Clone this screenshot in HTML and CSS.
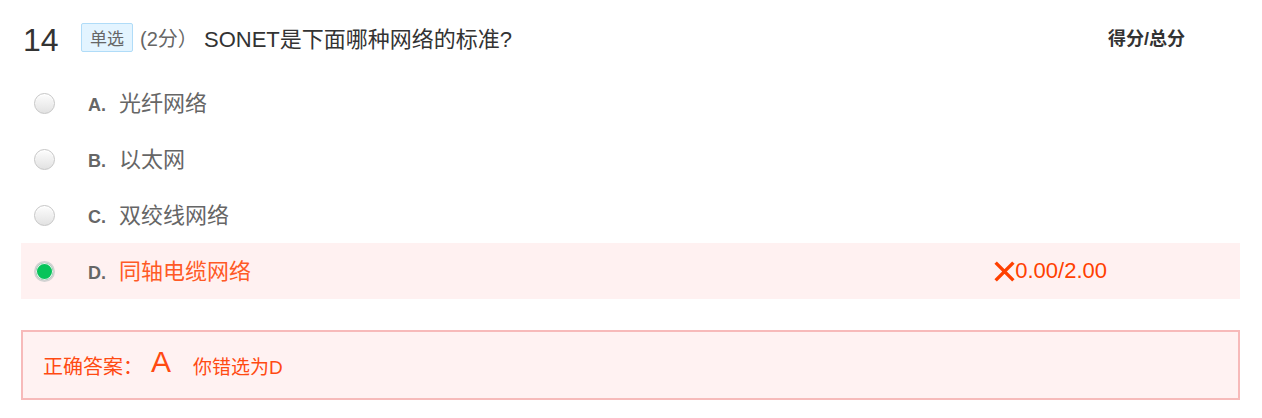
FILE: index.html
```html
<!DOCTYPE html>
<html lang="zh-CN">
<head>
<meta charset="utf-8">
<title>Question 14</title>
<link rel="stylesheet" href="styles.css">
</head>
<body>
<div class="quiz">
  <div class="q-head">
    <span class="q-num">14</span>
    <span class="q-tag">单选</span>
    <span class="q-score">(2分）</span>
    <span class="q-title">SONET是下面哪种网络的标准?</span>
    <span class="q-total">得分/总分</span>
  </div>
  <ul class="options">
    <li class="opt">
      <span class="radio"></span>
      <span class="opt-label"><span class="opt-letter">A.</span><span class="opt-text">光纤网络</span></span>
    </li>
    <li class="opt">
      <span class="radio"></span>
      <span class="opt-label"><span class="opt-letter">B.</span><span class="opt-text">以太网</span></span>
    </li>
    <li class="opt">
      <span class="radio"></span>
      <span class="opt-label"><span class="opt-letter">C.</span><span class="opt-text">双绞线网络</span></span>
    </li>
    <li class="opt opt-wrong">
      <span class="radio radio-on"></span>
      <span class="opt-label"><span class="opt-letter">D.</span><span class="opt-text">同轴电缆网络</span></span>
      <span class="result">
        <svg class="x-icon" viewBox="0 0 22 22" width="21" height="21" aria-hidden="true">
          <path d="M3 3 L19 19 M19 3 L3 19" stroke="#ff4000" stroke-width="3.6" stroke-linecap="square" fill="none"/>
        </svg><span class="result-num">0.00/2.00</span>
      </span>
    </li>
  </ul>
  <div class="answer">
    <span class="ans-label">正确答案：</span>
    <span class="ans-key">A</span>
    <span class="ans-yours">你错选为D</span>
  </div>
</div>
</body>
</html>
```

FILE: styles.css
```css
* { box-sizing: border-box; }

body {
  margin: 0;
  background: #ffffff;
  font-family: "Liberation Sans", "Noto Sans CJK SC", sans-serif;
  color: #333333;
}

.quiz {
  width: 1219px;
  margin-left: 21px;
  padding-top: 9px;
}

.q-head {
  display: flex;
  align-items: center;
  height: 56px;
}

.q-num {
  font-size: 32px;
  color: #333333;
  margin-left: 2px;
  margin-top: 6px;
  width: 58px;
}

.q-tag {
  display: inline-flex;
  align-items: center;
  height: 29px;
  padding: 0 8px;
  font-size: 17px;
  color: #666666;
  background: #e3f4ff;
  border: 1px solid #b0dcf8;
  border-radius: 2px;
}

.q-score {
  font-size: 20px;
  color: #666666;
  margin-left: 7px;
  width: 64px;
}

.q-title {
  font-size: 22px;
  color: #333333;
}

.q-total {
  margin-left: auto;
  margin-right: 55px;
  font-size: 18px;
  font-weight: bold;
  color: #333333;
}

.options {
  list-style: none;
  margin: 10px 0 0;
  padding: 0;
}

.opt {
  display: flex;
  align-items: center;
  height: 56px;
}

.radio {
  flex: none;
  width: 21px;
  height: 21px;
  margin-left: 13px;
  border-radius: 50%;
  border: 1px solid #c6c6c6;
  background: linear-gradient(#fdfdfd, #e2e2e2);
  box-shadow: inset 0 1px 1px #ffffff;
}

.radio-on {
  border: 2px solid #d2d2d2;
  background: #07c45a;
  box-shadow: inset 0 0 0 1px #f0f0f0;
}

.opt-label {
  display: flex;
  align-items: baseline;
  margin-left: 33px;
  margin-top: -4px;
}

.opt-letter {
  width: 31px;
  font-size: 18px;
  font-weight: bold;
  color: #666666;
}

.opt-text {
  font-size: 22px;
  color: #666666;
}

.opt-wrong {
  background: #fff1f1;
}

.opt-wrong .opt-text {
  color: #ff5a26;
}

.result {
  display: flex;
  align-items: center;
  margin-left: auto;
  margin-right: 133px;
}

.x-icon {
  display: block;
}

.result-num {
  font-size: 22px;
  color: #ff4000;
}

.answer {
  display: flex;
  align-items: center;
  height: 70px;
  margin-top: 31px;
  padding-left: 20px;
  background: #fff2f2;
  border: 2px solid #f7baba;
}

.ans-label {
  font-size: 20px;
  color: #ff4a12;
}

.ans-key {
  font-size: 30px;
  color: #ff4a12;
  margin-left: 8px;
  margin-top: -6px;
}

.ans-yours {
  font-size: 19px;
  color: #ff4a12;
  margin-left: 22px;
}
```
